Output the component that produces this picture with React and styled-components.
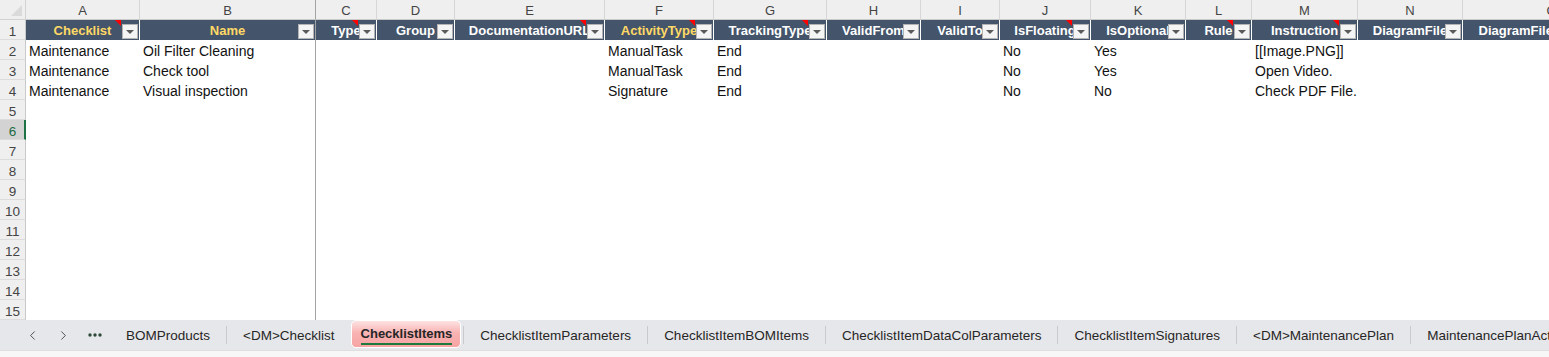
import React from "react";
import styled, { createGlobalStyle, css } from "styled-components";
import { ChevronLeft, ChevronRight } from "lucide-react";

const Global = createGlobalStyle`
  html, body { margin: 0; padding: 0; background: #ffffff; overflow: hidden; }
  * { box-sizing: border-box; }
`;

const FONT = `"Liberation Sans", Arial, sans-serif`;

const columns = [
  { key: "A", w: 114, title: "Checklist", yellow: true, note: true },
  { key: "B", w: 176, title: "Name", yellow: true, frozen: true },
  { key: "C", w: 61, title: "Type", note: true },
  { key: "D", w: 78, title: "Group" },
  { key: "E", w: 150, title: "DocumentationURL", note: true },
  { key: "F", w: 109, title: "ActivityType", yellow: true, note: true },
  { key: "G", w: 113, title: "TrackingType", note: true },
  { key: "H", w: 94, title: "ValidFrom" },
  { key: "I", w: 79, title: "ValidTo" },
  { key: "J", w: 91, title: "IsFloating", note: true },
  { key: "K", w: 95, title: "IsOptional" },
  { key: "L", w: 66, title: "Rule", note: true },
  { key: "M", w: 106, title: "Instruction", note: true },
  { key: "N", w: 105, title: "DiagramFile" },
  { key: "O", w: 178, title: "DiagramFileDescription" },
];

const data = [
  { A: "Maintenance", B: "Oil Filter Cleaning", F: "ManualTask", G: "End", J: "No", K: "Yes", M: "[[Image.PNG]]" },
  { A: "Maintenance", B: "Check tool", F: "ManualTask", G: "End", J: "No", K: "Yes", M: "Open Video." },
  { A: "Maintenance", B: "Visual inspection", F: "Signature", G: "End", J: "No", K: "No", M: "Check PDF File." },
];

const tabs = [
  "BOMProducts",
  "<DM>Checklist",
  "ChecklistItems",
  "ChecklistItemParameters",
  "ChecklistItemBOMItems",
  "ChecklistItemDataColParameters",
  "ChecklistItemSignatures",
  "<DM>MaintenancePlan",
  "MaintenancePlanActivities",
];
const ACTIVE = "ChecklistItems";
const SELECTED_ROW = 6;

const Window = styled.div`
  width: 1549px;
  height: 357px;
  display: flex;
  flex-direction: column;
  overflow: hidden;
  font-family: ${FONT};
  background: #ffffff;
`;

const Sheet = styled.div`
  height: 320px;
  display: flex;
  flex-direction: column;
  overflow: hidden;
`;

const Row = styled.div`
  display: flex;
  height: 20px;
  flex: 0 0 20px;
`;

const Corner = styled.div`
  position: relative;
  width: 26px;
  flex: 0 0 26px;
  background: #efefef;
  border-right: 1px solid #d2d2d2;
  border-bottom: 1px solid #d2d2d2;
  &::after {
    content: "";
    position: absolute;
    right: 3px;
    bottom: 3px;
    width: 0;
    height: 0;
    border-left: 11px solid transparent;
    border-bottom: 11px solid #dadada;
  }
`;

const ColLetter = styled.div`
  width: ${(p) => p.$w}px;
  flex: 0 0 ${(p) => p.$w}px;
  background: #efefef;
  border-right: 1px solid ${(p) => (p.$frozen ? "#a3a3a3" : "#d6d6d6")};
  border-bottom: 1px solid #c9c9c9;
  color: #444444;
  font-size: 13px;
  line-height: 19px;
  padding-top: 1px;
  text-align: center;
`;

const RowNum = styled.div`
  width: 26px;
  flex: 0 0 26px;
  background: ${(p) => (p.$selected ? "#d3d3d3" : "#efefef")};
  border-bottom: 1px solid #dcdcdc;
  border-right: ${(p) => (p.$selected ? "2px solid #1d7346" : "1px solid #c9c9c9")};
  color: ${(p) => (p.$selected ? "#1d6b45" : "#444444")};
  font-size: 13.5px;
  line-height: 19px;
  padding-top: 2px;
  text-align: center;
  overflow: hidden;
  padding-left: ${(p) => (p.$selected ? "1px" : "0")};
`;

const HeadCell = styled.div`
  position: relative;
  width: ${(p) => p.$w}px;
  flex: 0 0 ${(p) => p.$w}px;
  background: #44546a;
  border-right: 1px solid ${(p) => (p.$frozen ? "#a3a3a3" : "#ffffff")};
  color: ${(p) => (p.$yellow ? "#ffd966" : "#ffffff")};
  font-size: 13px;
  font-weight: 700;
  line-height: 20px;
  padding-top: 1px;
  text-align: center;
  white-space: nowrap;
  overflow: hidden;
  display: flex;
  justify-content: center;
`;

const NoteMark = styled.span`
  position: absolute;
  top: 0;
  right: 18px;
  width: 0;
  height: 0;
  border-left: 6px solid transparent;
  border-top: 6px solid #ff0000;
`;

const FilterButton = styled.span`
  position: absolute;
  top: 4px;
  right: 1px;
  width: 16px;
  height: 15px;
  background: #f4f4f4;
  border: 1px solid #b4b4b4;
  display: flex;
  align-items: center;
  justify-content: center;
  &::after {
    content: "";
    width: 0;
    height: 0;
    border-left: 4px solid transparent;
    border-right: 4px solid transparent;
    border-top: 4px solid #5a5a5a;
  }
`;

const Cell = styled.div`
  width: ${(p) => p.$w}px;
  flex: 0 0 ${(p) => p.$w}px;
  border-right: ${(p) => (p.$frozen ? "1px solid #a3a3a3" : "none")};
  padding: 2px 0 0 3px;
  color: #111111;
  font-size: 14px;
  line-height: 18px;
  white-space: nowrap;
  overflow: hidden;
`;

const TabBar = styled.div`
  height: 30px;
  flex: 0 0 30px;
  background: #e6e7ea;
  display: flex;
  align-items: center;
  overflow: hidden;
  white-space: nowrap;
`;

const NavButton = styled.div`
  width: 31px;
  flex: 0 0 31px;
  height: 30px;
  display: flex;
  align-items: center;
  justify-content: center;
  color: #3b3b3b;
  ${(p) =>
    p.$first &&
    css`
      margin-left: 17px;
    `}
`;

const Tab = styled.div`
  flex: 0 0 auto;
  padding: 1px 16px 0;
  font-size: 13.5px;
  color: #262626;
  line-height: 30px;
`;

const ActiveTab = styled.div`
  flex: 0 0 auto;
  height: 28px;
  margin: 0 2px 0 0;
  padding: 0 8px 0 9px;
  align-self: flex-start;
  border: 1px solid #ffffff;
  border-radius: 5px;
  background: linear-gradient(#fde3e3 0%, #f9b3b3 45%, #f6a3a3 100%);
  display: flex;
  align-items: center;
`;

const ActiveLabel = styled.span`
  font-size: 13px;
  font-weight: 700;
  color: #262626;
  line-height: 18px;
  border-bottom: 2px solid #1e7a3c;
  padding-top: 1px;
`;

const Separator = styled.span`
  flex: 0 0 1px;
  width: 1px;
  height: 18px;
  background: #c9cacd;
`;

const BottomStrip = styled.div`
  flex: 1 1 auto;
  background: #f7f7f7;
  border-top: 1px solid #dedede;
`;

function Dots() {
  return (
    <svg width="14" height="6" viewBox="0 0 14 6">
      <circle cx="2" cy="3" r="1.7" fill="#2f4a3b" />
      <circle cx="7" cy="3" r="1.7" fill="#2f4a3b" />
      <circle cx="12" cy="3" r="1.7" fill="#2f4a3b" />
    </svg>
  );
}

export default function App() {
  const rows = Array.from({ length: 15 }, (_, i) => i + 1);
  return (
    <Window>
      <Global />
      <Sheet>
        <Row>
          <Corner />
          {columns.map((c) => (
            <ColLetter key={c.key} $w={c.w} $frozen={c.frozen}>
              {c.key}
            </ColLetter>
          ))}
        </Row>
        {rows.map((n) => (
          <Row key={n}>
            <RowNum $selected={n === SELECTED_ROW}>{n}</RowNum>
            {n === 1
              ? columns.map((c) => (
                  <HeadCell key={c.key} $w={c.w} $yellow={c.yellow} $frozen={c.frozen}>
                    {c.title}
                    {c.note && <NoteMark />}
                    <FilterButton />
                  </HeadCell>
                ))
              : columns.map((c) => (
                  <Cell key={c.key} $w={c.w} $frozen={c.frozen}>
                    {(data[n - 2] && data[n - 2][c.key]) || ""}
                  </Cell>
                ))}
          </Row>
        ))}
      </Sheet>
      <TabBar>
        <NavButton $first>
          <ChevronLeft size={15} strokeWidth={1.4} />
        </NavButton>
        <NavButton>
          <ChevronRight size={15} strokeWidth={1.4} />
        </NavButton>
        <NavButton>
          <Dots />
        </NavButton>
        {tabs.map((t, i) => {
          const prevActive = i > 0 && tabs[i - 1] === ACTIVE;
          const sep = i > 0 && t !== ACTIVE && !prevActive;
          return (
            <React.Fragment key={t}>
              {(sep || prevActive) && <Separator />}
              {t === ACTIVE ? (
                <ActiveTab>
                  <ActiveLabel>{t}</ActiveLabel>
                </ActiveTab>
              ) : (
                <Tab>{t}</Tab>
              )}
            </React.Fragment>
          );
        })}
      </TabBar>
      <BottomStrip />
    </Window>
  );
}
